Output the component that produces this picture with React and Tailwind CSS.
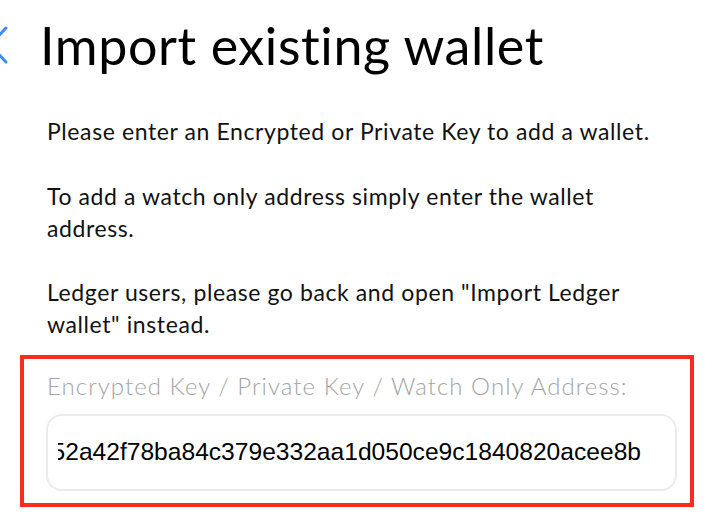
import React from "react";

const KEY =
  "0x5f1e3b9c7d2a46e8f0b1c2d3e4f56a7b8c9d0e1f23a4b5c6d7e8f9a0b1c2d3e4f52a42f78ba84c379e332aa1d050ce9c1840820acee8b";

function BackChevron() {
  return (
    <svg
      width="20"
      height="40"
      viewBox="0 0 20 40"
      fill="none"
      stroke="#3a8cf4"
      strokeWidth="3"
      strokeLinecap="round"
      strokeLinejoin="round"
      className="-ml-[12px] shrink-0"
    >
      <polyline points="18,3 2,20 18,37" />
    </svg>
  );
}

export default function App() {
  return (
    <div className="w-[712px] h-[520px] overflow-hidden bg-white text-black font-['Lato',sans-serif]">
      <div className="flex items-center pt-[15px]">
        <BackChevron />
        <h1 className="ml-[32px] text-[52px] leading-[60px] font-normal tracking-[0.6px]">
          Import existing wallet
        </h1>
      </div>

      <div className="mt-[40px] pl-[47px] pr-[10px] text-[23px] leading-[32px] tracking-[0.6px] text-[#111]">
        <p className="whitespace-nowrap">Please enter an Encrypted or Private Key to add a wallet.</p>
        <p className="mt-[33px] whitespace-nowrap">
          To add a watch only address simply enter the wallet
          <br />
          address.
        </p>
        <p className="mt-[32px] whitespace-nowrap">
          Ledger users, please go back and open "Import Ledger
          <br />
          wallet" instead.
        </p>
      </div>

      <div className="mt-[15px] ml-[20px] w-[674px] h-[152px] border-4 border-[#fb2b22] pl-[22px] pr-[13px] pt-[12px]">
        <label className="block ml-[1px] whitespace-nowrap text-[24px] leading-[30px] tracking-[1.05px] font-light text-[#a4a4a4]">
          Encrypted Key / Private Key / Watch Only Address:
        </label>
        <div className="mt-[13px] h-[77px] w-[631px] rounded-[16px] border-2 border-[#ebebeb] flex items-center pl-[10px] pr-[34px]">
          <div className="flex-1 flex justify-end overflow-hidden">
            <span className="whitespace-nowrap font-['Liberation_Sans',Arial,sans-serif] text-[24.6px] text-black">
              {KEY}
            </span>
          </div>
        </div>
      </div>
    </div>
  );
}
